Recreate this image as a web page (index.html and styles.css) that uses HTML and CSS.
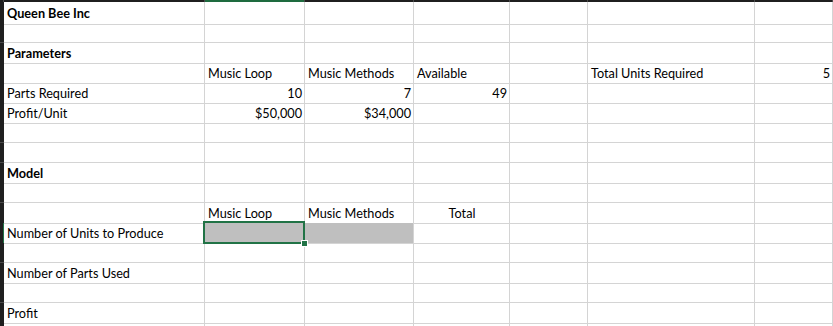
FILE: index.html
```html
<!DOCTYPE html>
<html>
<head>
<meta charset="utf-8">
<link rel="stylesheet" href="styles.css">
</head>
<body>
<div class="sheet">
  <div class="row top">
    <div class="h"></div><div class="h"></div><div class="h act"></div><div class="h"></div><div class="h"></div><div class="h"></div><div class="h"></div><div class="h"></div>
  </div>
  <div class="row first">
    <div class="rh"></div><div class="c b">Queen Bee Inc</div><div class="c"></div><div class="c"></div><div class="c"></div><div class="c"></div><div class="c"></div><div class="c"></div>
  </div>
  <div class="row">
    <div class="rh"></div><div class="c"></div><div class="c"></div><div class="c"></div><div class="c"></div><div class="c"></div><div class="c"></div><div class="c"></div>
  </div>
  <div class="row">
    <div class="rh"></div><div class="c b">Parameters</div><div class="c"></div><div class="c"></div><div class="c"></div><div class="c"></div><div class="c"></div><div class="c"></div>
  </div>
  <div class="row">
    <div class="rh"></div><div class="c"></div><div class="c">Music Loop</div><div class="c">Music Methods</div><div class="c">Available</div><div class="c"></div><div class="c">Total Units Required</div><div class="c r">5</div>
  </div>
  <div class="row">
    <div class="rh"></div><div class="c">Parts Required</div><div class="c r">10</div><div class="c r">7</div><div class="c r">49</div><div class="c"></div><div class="c"></div><div class="c"></div>
  </div>
  <div class="row">
    <div class="rh"></div><div class="c">Profit/Unit</div><div class="c r">$50,000</div><div class="c r">$34,000</div><div class="c"></div><div class="c"></div><div class="c"></div><div class="c"></div>
  </div>
  <div class="row">
    <div class="rh"></div><div class="c"></div><div class="c"></div><div class="c"></div><div class="c"></div><div class="c"></div><div class="c"></div><div class="c"></div>
  </div>
  <div class="row">
    <div class="rh"></div><div class="c"></div><div class="c"></div><div class="c"></div><div class="c"></div><div class="c"></div><div class="c"></div><div class="c"></div>
  </div>
  <div class="row">
    <div class="rh"></div><div class="c b">Model</div><div class="c"></div><div class="c"></div><div class="c"></div><div class="c"></div><div class="c"></div><div class="c"></div>
  </div>
  <div class="row">
    <div class="rh"></div><div class="c"></div><div class="c"></div><div class="c"></div><div class="c"></div><div class="c"></div><div class="c"></div><div class="c"></div>
  </div>
  <div class="row">
    <div class="rh"></div><div class="c"></div><div class="c">Music Loop</div><div class="c">Music Methods</div><div class="c m">Total</div><div class="c"></div><div class="c"></div><div class="c"></div>
  </div>
  <div class="row">
    <div class="rh hl"></div><div class="c">Number of Units to Produce</div><div class="c fill sel"><span class="handle"></span></div><div class="c fill"></div><div class="c"></div><div class="c"></div><div class="c"></div><div class="c"></div>
  </div>
  <div class="row">
    <div class="rh"></div><div class="c"></div><div class="c"></div><div class="c"></div><div class="c"></div><div class="c"></div><div class="c"></div><div class="c"></div>
  </div>
  <div class="row">
    <div class="rh"></div><div class="c">Number of Parts Used</div><div class="c"></div><div class="c"></div><div class="c"></div><div class="c"></div><div class="c"></div><div class="c"></div>
  </div>
  <div class="row">
    <div class="rh"></div><div class="c"></div><div class="c"></div><div class="c"></div><div class="c"></div><div class="c"></div><div class="c"></div><div class="c"></div>
  </div>
  <div class="row">
    <div class="rh"></div><div class="c">Profit</div><div class="c"></div><div class="c"></div><div class="c"></div><div class="c"></div><div class="c"></div><div class="c"></div>
  </div>
  <div class="row">
    <div class="rh"></div><div class="c"></div><div class="c"></div><div class="c"></div><div class="c"></div><div class="c"></div><div class="c"></div><div class="c"></div>
  </div>
</div>
</body>
</html>
```

FILE: styles.css
```css
html, body {
  margin: 0;
  padding: 0;
  background: #ffffff;
  overflow: hidden;
}
.sheet {
  width: 833px;
  height: 326px;
  overflow: hidden;
  font-family: "Lato", "Liberation Sans", sans-serif;
  font-size: 12.7px;
  color: #000;
}
.row {
  display: grid;
  grid-template-columns: 4px 201px 100px 109px 96px 78px 167px 78px;
  height: 20px;
}
.row.top {
  height: 2px;
}
.row.first {
  height: 21px;
}
.h {
  background: #1f1f1f;
  box-sizing: border-box;
  border-right: 1px solid #4a4a4a;
}
.h.act {
  background: #1e6b3f;
}
.rh {
  background: #1f1f1f;
  box-sizing: border-box;
  border-bottom: 1px solid #4a4a4a;
}
.rh.hl {
  box-shadow: inset -1px 0 0 #217346;
}
.c {
  box-sizing: border-box;
  border-right: 1px solid #d4d4d4;
  border-bottom: 1px solid #d4d4d4;
  padding: 0 2px 0 3px;
  line-height: 20px;
  white-space: nowrap;
  overflow: visible;
}
.first .c {
  line-height: 22px;
}
.c.b {
  font-weight: bold;
}
.c.r {
  text-align: right;
}
.c.m {
  text-align: center;
}
.c.fill {
  background: #bfbfbf;
}
.c.sel {
  position: relative;
}
.c.sel::after {
  content: "";
  position: absolute;
  left: -2px;
  top: -2px;
  right: -1px;
  bottom: -1px;
  border: 2px solid #217346;
}
.handle {
  position: absolute;
  right: -4px;
  bottom: -4px;
  width: 5px;
  height: 5px;
  background: #217346;
  border: 1px solid #ffffff;
  z-index: 2;
}
```
